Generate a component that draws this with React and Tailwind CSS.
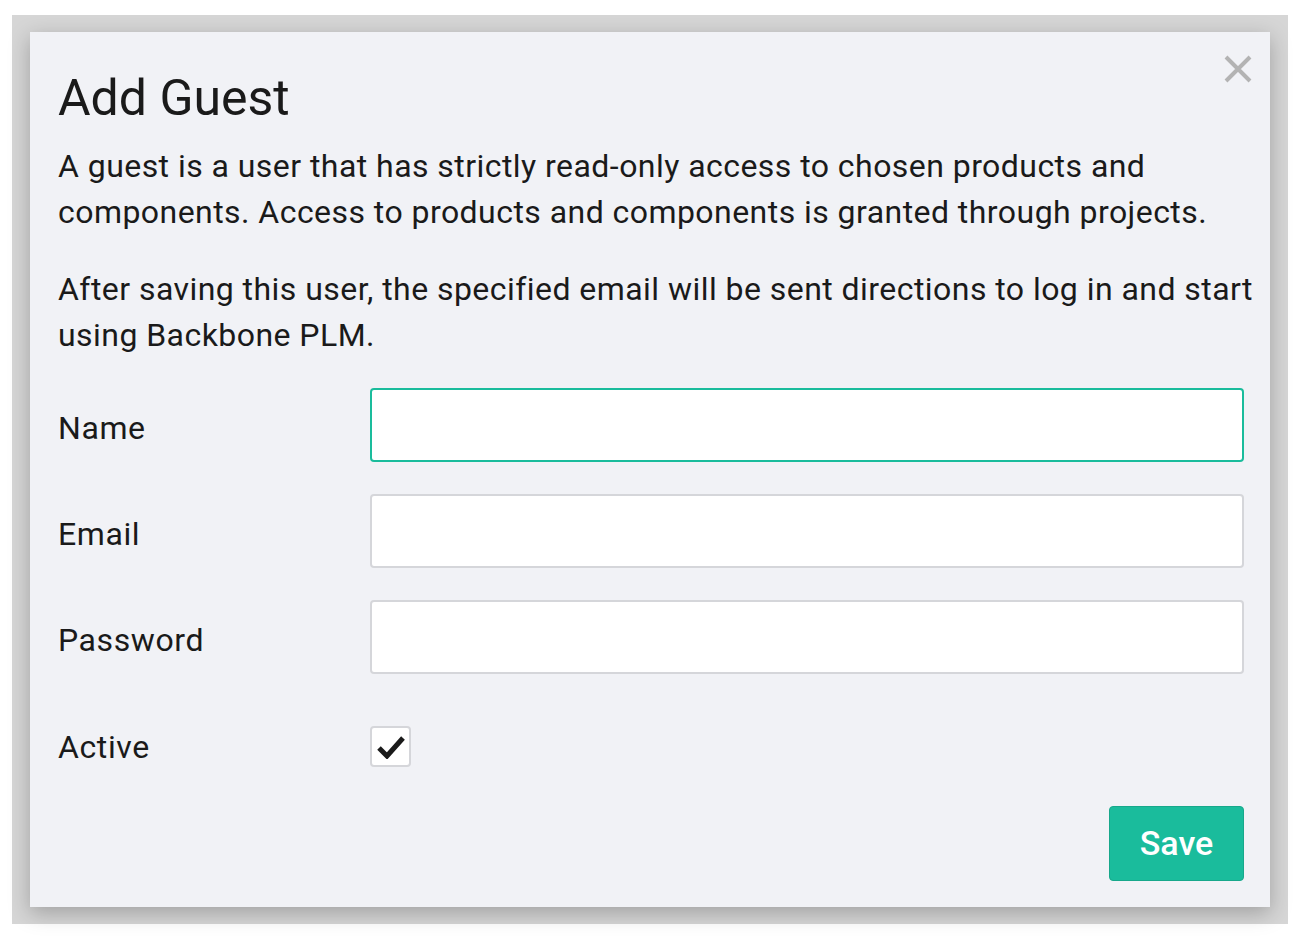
export default function App() {
  const fields = [
    { label: "Name", focused: true, type: "text" },
    { label: "Email", type: "email" },
    { label: "Password", type: "password" },
  ];

  return (
    <div className="min-h-screen bg-white pt-[15px] pl-[12px]" style={{ fontFamily: "Roboto, 'Noto Sans', sans-serif" }}>
      <div className="w-[1276px] h-[909px] bg-[#d6d6d6] pt-[17px] pl-[18px]">
        <div className="relative w-[1240px] h-[875px] bg-[#f1f2f6] shadow-[0_6px_20px_rgba(0,0,0,0.25)] pl-[28px] pr-[8px] pt-[36px] text-[#1a1a1a]">
          {/* close */}
          <button className="absolute right-[17px] top-[22px] text-[#b3b3b3]">
            <svg width="30" height="30" viewBox="0 0 30 30">
              <path d="M3 3 L27 27 M27 3 L3 27" stroke="currentColor" strokeWidth="4" strokeLinecap="butt" />
            </svg>
          </button>

          <h2 className="text-[50px] leading-[60px] font-normal">Add Guest</h2>

          <p className="mt-[15px] text-[32px] leading-[46px] tracking-[0.45px] pr-[40px]">
            A guest is a user that has strictly read-only access to chosen products and components. Access to products and components is granted through projects.
          </p>
          <p className="mt-[31px] text-[32px] leading-[46px] tracking-[0.45px]">
            After saving this user, the specified email will be sent directions to log in and start using Backbone PLM.
          </p>

          <div className="mt-[30px] flex flex-col gap-[32px] pr-[18px]">
            {fields.map((f) => (
              <div key={f.label} className="flex items-center">
                <label className="w-[312px] text-[32px] leading-[40px] tracking-[0.6px] pt-[6px]">{f.label}</label>
                <input
                  type={f.type}
                  className={
                    "flex-1 h-[74px] rounded-[4px] bg-white px-4 text-[28px] outline-none " +
                    (f.focused ? "border-[2px] border-[#1abc9c]" : "border-[2px] border-[#d5d6da]")
                  }
                />
              </div>
            ))}

            <div className="flex items-center h-[41px] mt-[20px]">
              <label className="w-[312px] text-[32px] leading-[40px] tracking-[0.6px]">Active</label>
              <div className="w-[41px] h-[41px] rounded-[4px] border-[2px] border-[#d5d6da] bg-white flex items-center justify-center">
                <svg width="28" height="24" viewBox="0 0 28 24">
                  <path d="M2 13 L10 21 L26 3" fill="none" stroke="#1a1a1a" strokeWidth="5" strokeLinejoin="miter" />
                </svg>
              </div>
            </div>
          </div>

          <div className="mt-[39px] flex justify-end pr-[18px]">
            <button className="w-[135px] h-[75px] rounded-[4px] bg-[#1abc9c] border border-[#17a88b] text-white text-[34px] font-medium">
              Save
            </button>
          </div>
        </div>
      </div>
    </div>
  );
}
